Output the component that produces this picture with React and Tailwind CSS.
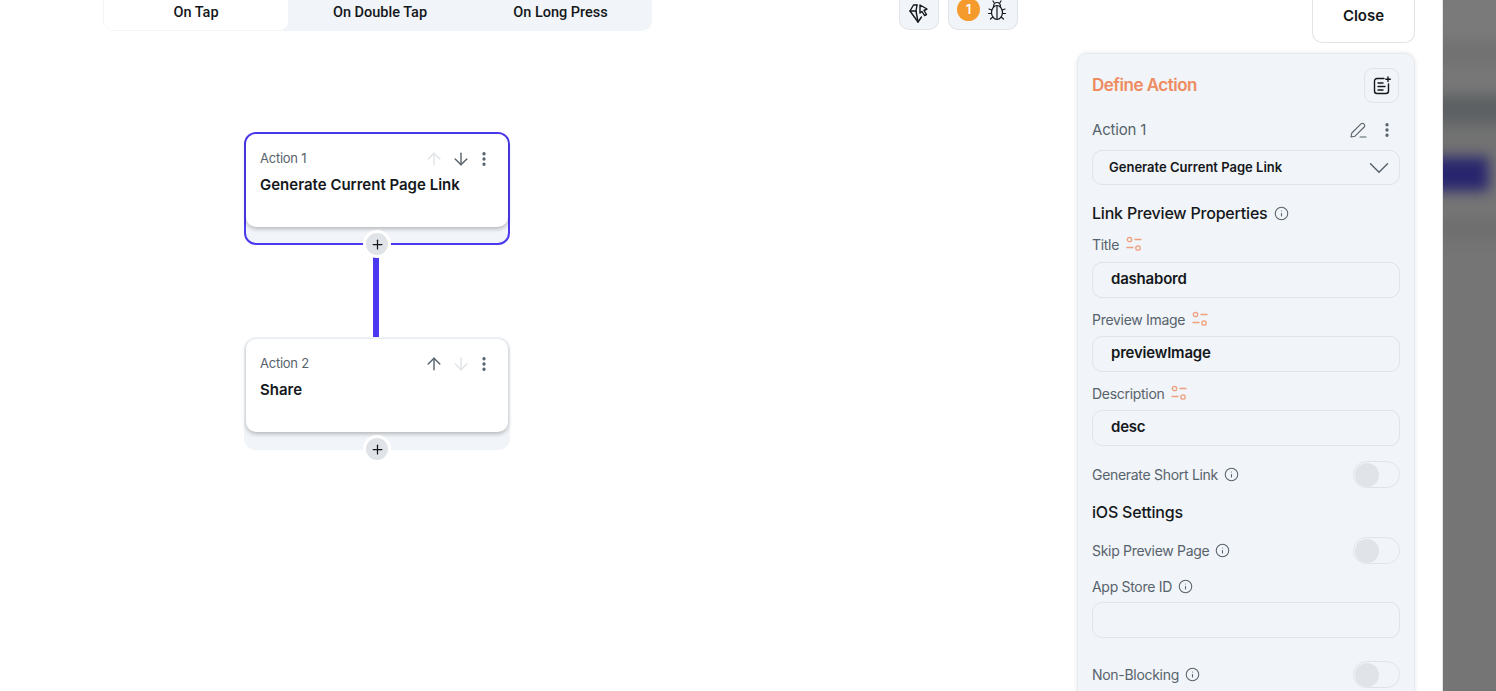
import { ArrowUp, ArrowDown, EllipsisVertical, Plus, Info, ChevronDown } from "lucide-react";

const font = { fontFamily: '"Inter", "Liberation Sans", sans-serif' };

function SlidersIcon() {
  return (
    <svg width="18" height="18" viewBox="0 0 18 18" fill="none" stroke="#ee8b60" strokeOpacity="0.8" strokeWidth="1.3" strokeLinecap="round">
      <circle cx="4.5" cy="4.5" r="2.2" />
      <path d="M10 4.5h6" />
      <path d="M2 12.5h6" />
      <circle cx="13" cy="13" r="2.2" />
    </svg>
  );
}

function PencilIcon() {
  return (
    <svg width="18" height="18" viewBox="0 0 18 18" fill="none" stroke="#57636c" strokeWidth="1.1" strokeLinecap="round" strokeLinejoin="round">
      <path d="M2 16l.8-4L12 2.8a1.9 1.9 0 0 1 2.7 0l.5.5a1.9 1.9 0 0 1 0 2.7L6 15.2z" />
      <path d="M11 16h6" />
    </svg>
  );
}

function NoteAddIcon() {
  return (
    <svg width="20" height="20" viewBox="0 0 20 20" fill="none" stroke="#14181b" strokeWidth="1.4" strokeLinecap="round" strokeLinejoin="round">
      <path d="M12 2.5H5a2.5 2.5 0 0 0-2.5 2.5v10A2.5 2.5 0 0 0 5 17.500h9a2.500 2.500 0 0 0 2.500-2.500V8" />
      <path d="M6 7h5M6 10.500h7M6 14h5" />
      <path d="M16 1v4.500M13.800 3.200h4.500" />
    </svg>
  );
}

function GemCursorIcon() {
  return (
    <svg width="22" height="22" viewBox="0 0 22 22" fill="none" stroke="#14181b" strokeWidth="1.4" strokeLinecap="round" strokeLinejoin="round">
      <path d="M9 2H5.500L2 8l8 11 3.500-5" />
      <path d="M2 8h6l2 11" />
      <path d="M9 2L8 8" />
      <path d="M12 2l7 4-3 1.500 2.500 4-2 1-2.500-4L12 10z" />
    </svg>
  );
}

function BugIcon() {
  return (
    <svg width="20" height="22" viewBox="0 0 20 22" fill="none" stroke="#14181b" strokeWidth="1.2" strokeLinecap="round" strokeLinejoin="round">
      <ellipse cx="10" cy="12.500" rx="5.500" ry="7" />
      <path d="M10 6v13" />
      <path d="M6.500 7C6.500 4 8 2.500 10 2.500S13.500 4 13.500 7" />
      <path d="M7 2.500L6 1M13 2.500L14 1M4.800 10L2 9M15.200 10L18 9M4.500 13.500H1.500M15.500 13.500h3M5.800 17L3.500 19M14.200 17l2.300 2" />
    </svg>
  );
}

function Toggle() {
  return (
    <div className="w-[47px] h-[27px] rounded-full border border-[#e0e3e7] bg-[#f1f4f8] flex items-center pl-[1px]">
      <div className="w-[24px] h-[24px] rounded-full bg-[#e0e3e7]" />
    </div>
  );
}

function Label({ text, extra, className = "" }) {
  return (
    <div className={`flex items-center gap-[6px] h-[20px] text-[14px] tracking-[-0.3px] text-[#57636c] ${className}`}>
      <span>{text}</span>
      {extra}
    </div>
  );
}

function InfoDot() {
  return <Info size={15} strokeWidth={1.7} color="#57636c" />;
}

function TextBox({ value, className = "" }) {
  return (
    <div className={`h-[36px] pb-[1px] rounded-[10px] border border-[#e0e3e7] flex items-center pl-[18px] text-[15px] tracking-[-0.2px] font-semibold text-[#14181b] ${className}`}>
      {value}
    </div>
  );
}

function ToggleRow({ text, className = "" }) {
  return (
    <div className={`flex items-center justify-between ${className}`}>
      <Label text={text} extra={<InfoDot />} />
      <Toggle />
    </div>
  );
}

function ActionNode({ index, name, active, upOn, downOn }) {
  return (
    <div className={`relative w-[266px] h-[113px] rounded-[12px] border-2 bg-[#f1f4f8] ${active ? "border-[#4b39ef]" : "border-transparent"}`}>
      <div className="h-[93px] bg-white rounded-[10px] shadow-[0_2px_4px_rgba(0,0,0,0.25)] pl-[14px] pr-[15px] pt-[14px]">
        <div className="flex items-center h-[22px]">
          <span className="text-[13px] tracking-[-0.25px] text-[#57636c] flex-1">{`Action ${index}`}</span>
          <div className="flex items-center">
            <ArrowUp size={20} strokeWidth={1.7} color={upOn ? "#57636c" : "#e0e3e7"} />
            <div className="ml-[7px]"><ArrowDown size={20} strokeWidth={1.7} color={downOn ? "#57636c" : "#e0e3e7"} /></div>
            <div className="ml-[4px]"><EllipsisVertical size={18} strokeWidth={2.4} color="#57636c" /></div>
          </div>
        </div>
        <div className="mt-[4px] text-[15px] font-semibold text-[#14181b]">{name}</div>
      </div>
      <div className="absolute left-[117px] top-[96px] w-[28px] h-[28px] rounded-full border-[3px] border-white bg-[#e0e3e7] flex items-center justify-center">
        <Plus size={15} strokeWidth={2} color="#14181b" />
      </div>
    </div>
  );
}

export default function App() {
  return (
    <div className="w-[1496px] h-[691px] overflow-hidden flex bg-white" style={font}>
      <div className="w-[1443px] h-[691px] flex flex-col shrink-0 border-r border-[#e5e5e5]">
        {/* top bar */}
        <div className="h-[43px] flex items-start shrink-0">
          <div
            className="ml-[103px] w-[549px] h-[31px] flex bg-[#f1f4f8] rounded-b-[10px] border-b border-x border-[#f1f4f8] text-[14.5px] font-medium text-[#14181b]"
            style={{ fontFamily: "Roboto, sans-serif" }}
          >
            <div className="w-[184px] h-[30px] pb-[5px] flex items-center justify-center bg-white rounded-b-[8px]">On Tap</div>
            <div className="w-[184px] h-[30px] pb-[5px] flex items-center justify-center">On Double Tap</div>
            <div className="flex-1 h-[30px] pb-[5px] pr-[2px] flex items-center justify-center">On Long Press</div>
          </div>
          <div className="ml-[247px] w-[40px] h-[30px] rounded-b-[10px] bg-[#f1f4f8] border-b border-x border-[#e0e3e7] flex items-center justify-center pb-[2px]">
            <GemCursorIcon />
          </div>
          <div className="ml-[9px] w-[70px] h-[30px] rounded-b-[10px] bg-[#f1f4f8] border-b border-x border-[#e0e3e7] flex items-start gap-[7px] pl-[8px]">
            <div className="-mt-[2px] w-[23px] h-[23px] shrink-0 rounded-full bg-[#f59b2e] text-white text-[13px] font-semibold flex items-center justify-center">1</div>
            <BugIcon />
          </div>
          <div className="ml-[294px] w-[103px] h-[43px] rounded-b-[10px] bg-white border-b border-x border-[#e0e3e7] flex items-center justify-center pb-[9px] text-[15px] font-semibold text-[#14181b]">
            Close
          </div>
        </div>

        <div className="flex flex-1 min-h-0">
          {/* canvas */}
          <div className="w-[1077px] shrink-0 pl-[244px] pt-[89px] flex flex-col">
            <ActionNode index={1} name="Generate Current Page Link" active downOn />
            <div className="ml-[129px] w-[6px] h-[92px] bg-[#4b39ef]" />
            <ActionNode index={2} name="Share" upOn />
          </div>

          {/* define action panel */}
          <div className="mt-[10px] w-[338px] h-[700px] shrink-0 bg-[#f1f4f8] rounded-t-[10px] border border-[#e7eaef] shadow-[0_0_4px_rgba(0,0,0,0.1)] pl-[14px] pr-[14px] flex flex-col">
            <div className="mt-[14px] h-[35px] flex items-center justify-between">
              <span className="text-[17px] font-semibold tracking-[-0.5px] text-[#ee8b60]">Define Action</span>
              <div className="mr-[1px] w-[35px] h-[35px] rounded-[9px] border border-[#e0e3e7] flex items-center justify-center">
                <NoteAddIcon />
              </div>
            </div>
            <div className="mt-[15px] h-[24px] flex items-center text-[15px] tracking-[-0.2px] text-[#57636c]">
              <span className="flex-1">Action 1</span>
              <PencilIcon />
              <div className="ml-[11px] mr-[4px]"><EllipsisVertical size={18} strokeWidth={2.4} color="#57636c" /></div>
            </div>
            <div className="mt-[8px] h-[35px] rounded-[10px] border border-[#e0e3e7] flex items-center justify-between pl-[16px] pr-[3px] text-[13px] font-semibold text-[#14181b]">
              <span>Generate Current Page Link</span>
              <ChevronDown size={34} strokeWidth={1.05} color="#57636c" />
            </div>
            <div className="mt-[16px] h-[24px] flex items-center gap-[6px] text-[16px] font-medium tracking-[-0.2px] text-[#14181b]">
              <span>Link Preview Properties</span>
              <InfoDot />
            </div>
            <Label text="Title" extra={<SlidersIcon />} className="mt-[9px]" />
            <TextBox value="dashabord" className="mt-[8px]" />
            <Label text="Preview Image" extra={<SlidersIcon />} className="mt-[11px]" />
            <TextBox value="previewImage" className="mt-[7px]" />
            <Label text="Description" extra={<SlidersIcon />} className="mt-[11px]" />
            <TextBox value="desc" className="mt-[7px]" />
            <ToggleRow text="Generate Short Link" className="mt-[15px]" />
            <div className="mt-[12px] h-[24px] flex items-center text-[16px] font-medium tracking-[-0.2px] text-[#14181b]">iOS Settings</div>
            <ToggleRow text="Skip Preview Page" className="mt-[13px]" />
            <Label text="App Store ID" extra={<InfoDot />} className="mt-[12px]" />
            <TextBox value="" className="mt-[6px]" />
            <ToggleRow text="Non-Blocking" className="mt-[23px]" />
          </div>
        </div>
      </div>

      {/* dimmed page behind the sheet */}
      <div className="flex-1 h-[691px] overflow-hidden bg-[#757575]">
        <div className="-ml-[14px] -mt-[10px] flex flex-col blur-[7px] h-[270px] w-[90px]">
          <div className="h-[50px] bg-[#7a7a7a]" />
          <div className="h-[25px] bg-[#727272]" />
          <div className="h-[30px] bg-[#777777]" />
          <div className="h-[28px] bg-[#5c6062]" />
          <div className="h-[34px] bg-[#727272]" />
          <div className="h-[34px] w-[60px] bg-[#28256e]" />
          <div className="h-[28px] bg-[#757575]" />
          <div className="h-[20px] bg-[#6e6e6e]" />
        </div>
      </div>
    </div>
  );
}
